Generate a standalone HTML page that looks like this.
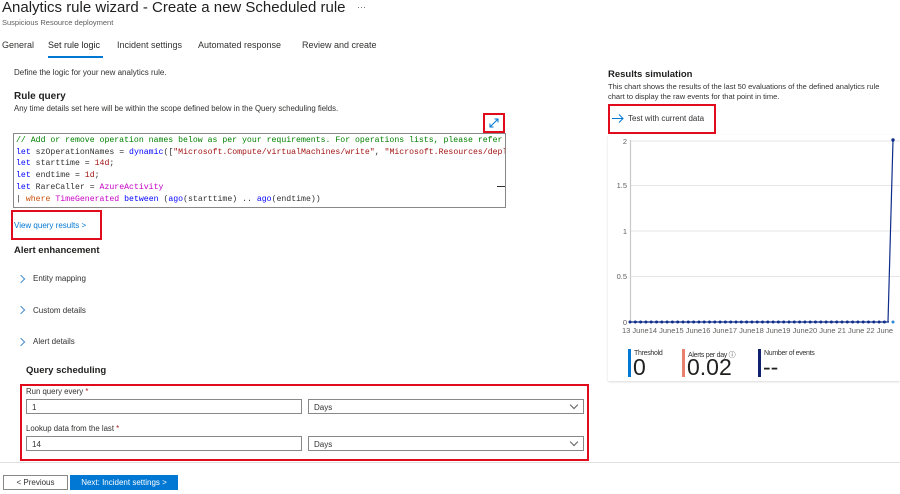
<!DOCTYPE html>
<html><head><meta charset="utf-8"><style>
*{margin:0;padding:0;box-sizing:border-box}
body{width:900px;height:494px;background:#fff;font-family:"Liberation Sans",sans-serif;color:#323130;position:relative;overflow:hidden}
.a{position:absolute;white-space:nowrap}
.rb{position:absolute;border:2px solid #e00b1c}
.code{position:absolute;left:13px;top:133px;width:493px;height:75px;border:1px solid #8a8886;overflow:hidden;font-family:"Liberation Mono",monospace;font-size:8.2px;line-height:11.7px;padding:1px 0 0 2px}
.code div{white-space:nowrap}
.g{color:#008000}.b{color:#0000ff}.r{color:#a31515}.m{color:#c700c7}.o{color:#c94f0a}.br{color:#a31515}
.inp{position:absolute;height:15px;border:1px solid #8a8886;font-size:8px;padding:3px 0 0 5px}
.chev{position:absolute;width:6px;height:6px;border-right:1px solid #4a90d0;border-top:1px solid #4a90d0;transform:rotate(45deg)}
.dd{position:absolute;width:6px;height:6px;border-right:1px solid #605e5c;border-bottom:1px solid #605e5c;transform:rotate(45deg)}
</style></head><body>
<div class="a" style="left:2px;top:-1px;font-size:15px;color:#201f1e">Analytics rule wizard - Create a new Scheduled rule</div>
<div class="a" style="left:357px;top:2px;font-size:9px;color:#605e5c">···</div>
<div class="a" style="left:2px;top:18px;font-size:7.5px;color:#605e5c">Suspicious Resource deployment</div>
<div class="a" style="left:2px;top:40px;font-size:9px">General</div>
<div class="a" style="left:48px;top:40px;font-size:9px;color:#201f1e">Set rule logic</div>
<div class="a" style="left:48px;top:56px;width:55px;height:2px;background:#0078d4"></div>
<div class="a" style="left:117px;top:40px;font-size:9px">Incident settings</div>
<div class="a" style="left:198px;top:40px;font-size:9px">Automated response</div>
<div class="a" style="left:302px;top:40px;font-size:9px">Review and create</div>
<div class="a" style="left:14px;top:68px;font-size:8px">Define the logic for your new analytics rule.</div>
<div class="a" style="left:14px;top:91px;font-size:10px;font-weight:bold;color:#201f1e">Rule query</div>
<div class="a" style="left:14px;top:104px;font-size:7.8px">Any time details set here will be within the scope defined below in the Query scheduling fields.</div>
<div class="rb" style="left:483px;top:113px;width:22px;height:20px"></div>
<svg class="a" style="left:488px;top:117px" width="12" height="12" viewBox="0 0 12 12"><path d="M2 10L10 2M6.5 2H10V5.5M2 6.5V10H5.5" stroke="#0078d4" stroke-width="1" fill="none"/></svg>
<div class="code">
<div class="g">// Add or remove operation names below as per your requirements. For operations lists, please refer</div>
<div><span class="b">let</span> szOperationNames = <span class="b">dynamic</span>([<span class="r">"Microsoft.Compute/virtualMachines/write"</span>, <span class="r">"Microsoft.Resources/depl</span></div>
<div><span class="b">let</span> starttime = <span class="br">14d</span>;</div>
<div><span class="b">let</span> endtime = <span class="br">1d</span>;</div>
<div><span class="b">let</span> RareCaller = <span class="m">AzureActivity</span></div>
<div>| <span class="o">where</span> <span class="m">TimeGenerated</span> <span class="b">between</span> (<span class="b">ago</span>(starttime) .. <span class="b">ago</span>(endtime))</div>
</div>
<div class="a" style="left:497px;top:186px;width:8px;height:1px;background:#333"></div>
<div class="rb" style="left:11px;top:210px;width:91px;height:30px"></div>
<div class="a" style="left:14px;top:221px;font-size:8px;color:#0078d4">View query results &gt;</div>
<div class="a" style="left:14px;top:245px;font-size:9.5px;font-weight:bold;color:#201f1e">Alert enhancement</div>
<div class="chev" style="left:18px;top:276px"></div><div class="a" style="left:33px;top:274px;font-size:8px">Entity mapping</div>
<div class="chev" style="left:18px;top:307px"></div><div class="a" style="left:33px;top:306px;font-size:8px">Custom details</div>
<div class="chev" style="left:18px;top:339px"></div><div class="a" style="left:33px;top:337px;font-size:8px">Alert details</div>
<div class="a" style="left:26px;top:365px;font-size:9.5px;font-weight:bold;color:#201f1e">Query scheduling</div>
<div class="rb" style="left:20px;top:384px;width:569px;height:77px"></div>
<div class="a" style="left:26px;top:387px;font-size:7.8px">Run query every <span style="color:#a4262c">*</span></div>
<div class="inp" style="left:26px;top:399px;width:276px">1</div>
<div class="inp" style="left:308px;top:399px;width:276px">Days</div><div class="dd" style="left:571px;top:402px"></div>
<div class="a" style="left:26px;top:424px;font-size:7.8px">Lookup data from the last <span style="color:#a4262c">*</span></div>
<div class="inp" style="left:26px;top:436px;width:276px">14</div>
<div class="inp" style="left:308px;top:436px;width:276px">Days</div><div class="dd" style="left:571px;top:439px"></div>
<div class="a" style="left:0;top:462px;width:900px;height:1px;background:#e1dfdd"></div>
<div class="a" style="left:3px;top:475px;width:65px;height:15px;border:1px solid #8a8886;font-size:8px;text-align:center;padding-top:2px">&lt; Previous</div>
<div class="a" style="left:70px;top:475px;width:108px;height:15px;background:#0078d4;color:#fff;font-size:8px;text-align:center;padding-top:3px">Next: Incident settings &gt;</div>

<div class="a" style="left:608px;top:69px;font-size:9.5px;font-weight:bold;color:#201f1e">Results simulation</div>
<div class="a" style="left:608px;top:82px;font-size:7.5px">This chart shows the results of the last 50 evaluations of the defined analytics rule</div>
<div class="a" style="left:608px;top:92px;font-size:7.5px">chart to display the raw events for that point in time.</div>
<div class="rb" style="left:608px;top:104px;width:108px;height:30px"></div>
<svg class="a" style="left:612px;top:114px" width="12" height="9" viewBox="0 0 12 9"><path d="M0 4.5H11M7 0.5L11 4.5L7 8.5" stroke="#0078d4" fill="none" stroke-width="1"/></svg>
<div class="a" style="left:628px;top:114px;font-size:8px">Test with current data</div>
<div class="a" style="left:608px;top:135px;width:292px;height:246px;box-shadow:0 1px 2px rgba(0,0,0,.15)"></div>
<svg class="a" style="left:600px;top:130px" width="300" height="210">
<g stroke="#e6e6e6"><line x1="30" y1="55.5" x2="300" y2="55.5"/><line x1="30" y1="101" x2="300" y2="101"/><line x1="30" y1="146.5" x2="300" y2="146.5"/><line x1="30" y1="11" x2="300" y2="11"/></g>
<line x1="30.5" y1="10" x2="30.5" y2="192" stroke="#c8c8c8" stroke-width="1.2"/>
<g font-size="7.5" fill="#605e5c" text-anchor="end" font-family="Liberation Sans"><text x="27" y="14">2</text><text x="27" y="58">1.5</text><text x="27" y="104">1</text><text x="27" y="149">0.5</text><text x="27" y="195">0</text></g>
<line x1="30" y1="192" x2="289" y2="192" stroke="#0f2d8a" stroke-width="1.2"/>
<line x1="30" y1="192" x2="289" y2="192" stroke="#0f2d8a" stroke-width="3" stroke-linecap="round" stroke-dasharray="0 5.3"/>
<polyline points="288,192 293,10" stroke="#0f2d8a" fill="none" stroke-width="1.2"/>
<circle cx="293" cy="10" r="1.7" fill="#0f2d8a"/><circle cx="293" cy="192" r="1.5" fill="#2b88d8"/>
<text x="22" y="203" font-size="7.5" fill="#605e5c" font-family="Liberation Sans">13 June14 June15 June16 June17 June18 June19 June20 June  21 June 22 June</text>
</svg>
<div class="a" style="left:628px;top:349px;width:3px;height:28px;background:#0078d4"></div>
<div class="a" style="left:634px;top:350px;font-size:7px;letter-spacing:-.3px">Threshold</div>
<div class="a" style="left:633px;top:354px;font-size:23px;color:#201f1e">0</div>
<div class="a" style="left:682px;top:349px;width:3px;height:28px;background:#e8826e"></div>
<div class="a" style="left:688px;top:350px;font-size:7px;letter-spacing:-.3px">Alerts per day <span style="font-size:7px">ⓘ</span></div>
<div class="a" style="left:687px;top:354px;font-size:23px;color:#201f1e">0.02</div>
<div class="a" style="left:758px;top:349px;width:3px;height:28px;background:#0f2070"></div>
<div class="a" style="left:764px;top:350px;font-size:7px;letter-spacing:-.3px">Number of events</div>
<div class="a" style="left:763px;top:354px;font-size:23px;color:#201f1e">--</div>
</body></html>
